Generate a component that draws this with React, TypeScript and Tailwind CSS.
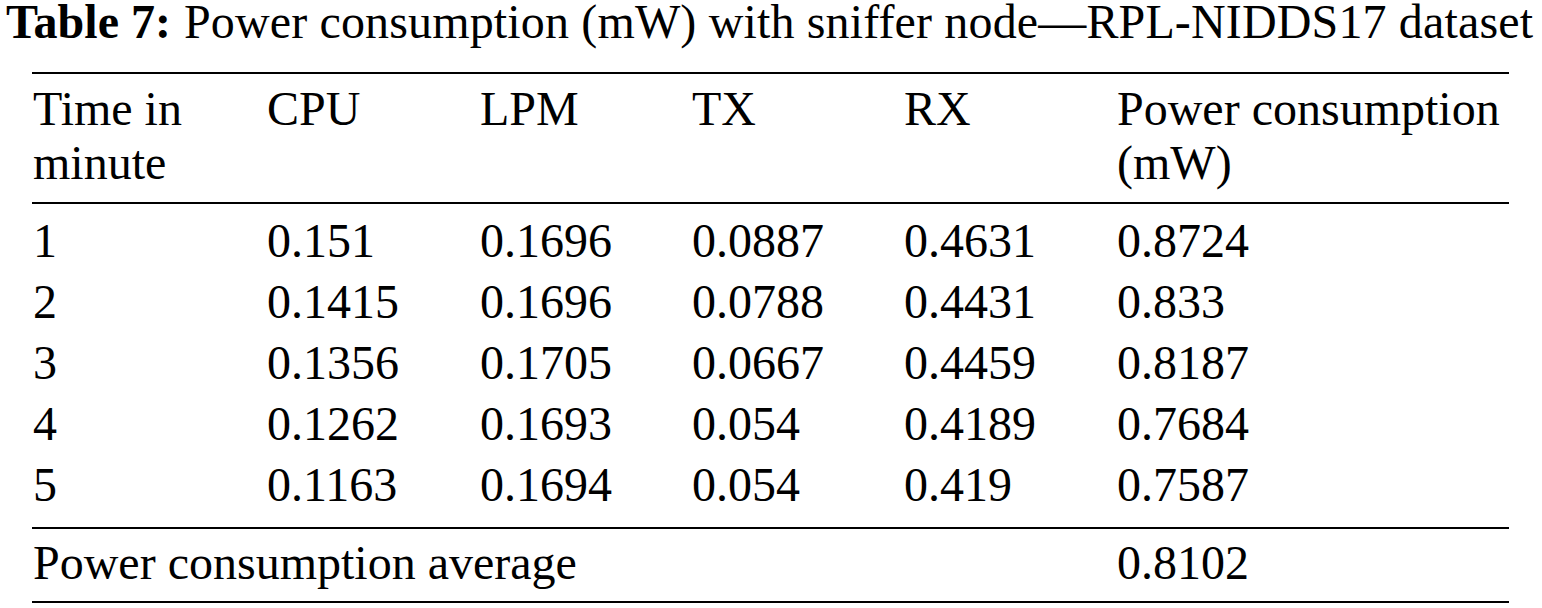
const rows = [
  ["1", "0.151", "0.1696", "0.0887", "0.4631", "0.8724"],
  ["2", "0.1415", "0.1696", "0.0788", "0.4431", "0.833"],
  ["3", "0.1356", "0.1705", "0.0667", "0.4459", "0.8187"],
  ["4", "0.1262", "0.1693", "0.054", "0.4189", "0.7684"],
  ["5", "0.1163", "0.1694", "0.054", "0.419", "0.7587"],
];

const cols = "grid grid-cols-[235px_213px_212px_212px_213px_1fr]";

export default function App() {
  return (
    <div className="w-[1542px] h-[608px] bg-white text-black font-['Liberation_Serif','Times_New_Roman',serif] text-[48px] overflow-hidden">
      <div className="flex pl-[6px] leading-[44px] whitespace-nowrap">
        <span className="font-bold">Table 7:</span>
        <span className="ml-[13px] tracking-[0.15px]">Power consumption (mW) with sniffer node—RPL-NIDDS17 dataset</span>
      </div>

      <div className="mt-[28px] ml-[32px] w-[1477px]">
        <div className="border-t-2 border-black" />

        <div className={`${cols} pt-[8px] pb-[12px] leading-[54px]`}>
          <div className="pl-[1px]">
            <div>Time in</div>
            <div>minute</div>
          </div>
          <div>CPU</div>
          <div>LPM</div>
          <div>TX</div>
          <div>RX</div>
          <div>
            <div className="whitespace-nowrap">Power consumption</div>
            <div>(mW)</div>
          </div>
        </div>

        <div className="border-t-2 border-black" />

        <div className="pt-[6px] pb-[12px]">
          {rows.map((r) => (
            <div key={r[0]} className={`${cols} leading-[61px]`}>
              {r.map((c, i) => (
                <div key={i} className={i === 0 ? "pl-[1px]" : ""}>
                  {c}
                </div>
              ))}
            </div>
          ))}
        </div>

        <div className="border-t-2 border-black" />

        <div className={`${cols} pt-[10px] pb-[14px] leading-[48px]`}>
          <div className="col-span-5 pl-[1px]">Power consumption average</div>
          <div>0.8102</div>
        </div>

        <div className="border-t-2 border-black" />
      </div>
    </div>
  );
}
